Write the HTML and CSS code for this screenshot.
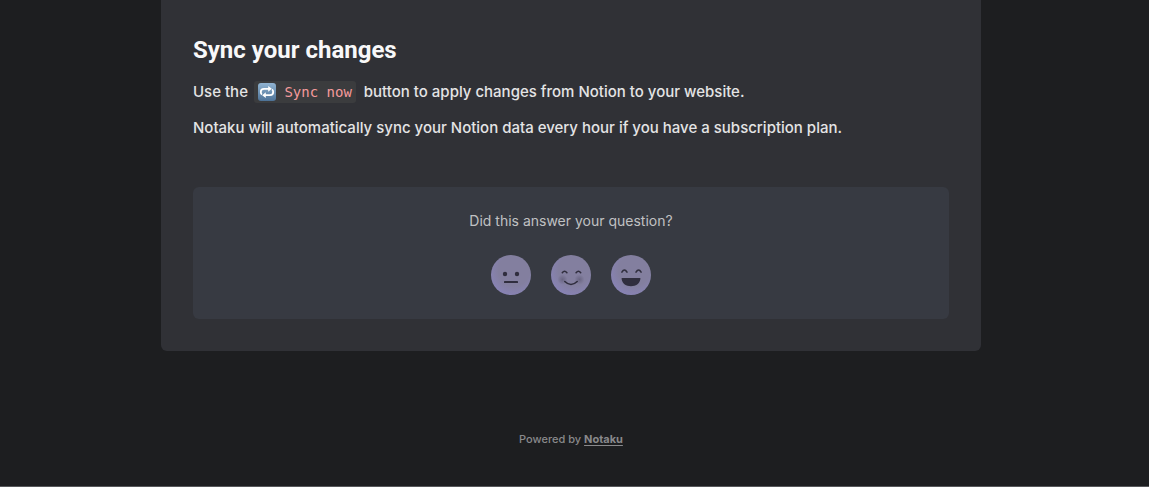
FILE: index.html
```html
<!DOCTYPE html>
<html lang="en">
  <head>
    <meta charset="UTF-8" />
    <meta name="viewport" content="width=device-width, initial-scale=1.0" />
    <title>Sync your changes</title>
    <link rel="stylesheet" href="styles.css">
  </head>
  <body>
    <main>
      <div class="card">
        <article class="content">
          <h2>Sync your changes</h2>
          <p>
            Use the
            <code><svg class="sync-icon" viewBox="0 0 18 18" aria-hidden="true">
                <defs>
                  <linearGradient id="syncBg" x1="0" y1="0" x2="0" y2="1">
                    <stop offset="0" stop-color="#91b4d2" />
                    <stop offset="1" stop-color="#4d7297" />
                  </linearGradient>
                </defs>
                <rect width="18" height="18" rx="3" fill="url(#syncBg)" />
                <g fill="none" stroke="#fff" stroke-width="1.8">
                  <path d="M3.9 11.6Q2.8 10.6 2.8 9Q2.8 5.8 6 5.8H11" />
                  <path d="M14.1 6.4Q15.2 7.4 15.2 9Q15.2 12.2 12 12.2H7" />
                </g>
                <path d="M10.2 2.9L13.8 5.8L10.2 8.7ZM7.8 9.3L4.2 12.2L7.8 15.1Z" fill="#fff" />
              </svg> Sync now</code>
            button to apply changes from Notion to your website.
          </p>
          <p>Notaku will automatically sync your Notion data every hour if you have a subscription plan.</p>
        </article>

        <section class="feedback">
          <p id="question">Did this answer your question?</p>
          <div class="faces" role="group" aria-labelledby="question">
            <button type="button" aria-label="Not really">
              <svg viewBox="0 0 40 40">
                <defs>
                  <radialGradient id="face" cx="0.58" cy="0.38" r="0.65">
                    <stop offset="0.6" stop-color="#837f9f" />
                    <stop offset="1" stop-color="#8883b5" />
                  </radialGradient>
                  <radialGradient id="blush">
                    <stop offset="0" stop-color="#635f7b" stop-opacity="0.8" />
                    <stop offset="1" stop-color="#635f7b" stop-opacity="0" />
                  </radialGradient>
                </defs>
                <circle cx="20" cy="20" r="20" fill="url(#face)" />
                <circle cx="14" cy="19" r="2.2" fill="#302e3e" />
                <circle cx="26" cy="19" r="2.2" fill="#302e3e" />
                <rect x="13" y="26" width="14" height="2" rx="0.6" fill="#302e3e" />
              </svg>
            </button>
            <button type="button" aria-label="Yes">
              <svg viewBox="0 0 40 40">
                <circle cx="20" cy="20" r="20" fill="url(#face)" />
                <circle cx="11.5" cy="24.5" r="5" fill="url(#blush)" />
                <circle cx="28.5" cy="24.5" r="5" fill="url(#blush)" />
                <g fill="none" stroke="#302e3e" stroke-width="1.6" stroke-linecap="round">
                  <path d="M11.3 17.7Q13.5 14.9 15.9 17.7" />
                  <path d="M25.1 17.7Q27.5 14.9 29.7 17.7" />
                  <path d="M13.8 26.5Q20 32.5 26.2 26.5" />
                </g>
              </svg>
            </button>
            <button type="button" aria-label="Definitely">
              <svg viewBox="0 0 40 40">
                <circle cx="20" cy="20" r="20" fill="url(#face)" />
                <g fill="none" stroke="#302e3e" stroke-width="1.6" stroke-linecap="round">
                  <path d="M10.9 17.1Q13.4 12.9 16 17.1" />
                  <path d="M25 17.1Q27.6 12.9 30.1 17.1" />
                </g>
                <path d="M11 23H29Q29.6 23 29.4 24C28.5 29 25 31.2 20 31.2S11.5 29 10.6 24Q10.4 23 11 23Z" fill="#302e3e" />
              </svg>
            </button>
          </div>
        </section>
      </div>
    </main>

    <footer>Powered by <a href="#">Notaku</a></footer>
  </body>
</html>
```

FILE: styles.css
```css
* {
  box-sizing: border-box;
}
body {
  margin: 0;
  background: #1d1e20;
  color: #e4e4e5;
  font-family: Inter, sans-serif;
  font-size: 15px;
  line-height: 24px;
  font-weight: 500;
}
main {
  padding: 0 15px 0 8px;
}
.card {
  max-width: 820px;
  margin: 0 auto;
  padding: 32px;
  background: #303136;
  border-radius: 0 0 6px 6px;
}
.content h2 {
  margin: 0 0 12px;
  color: #f8f8f9;
  font-family: Roboto, sans-serif;
  font-size: 24px;
  line-height: 36px;
  font-weight: 700;
}
.content p {
  margin: 0 0 12px;
}
code {
  margin: 0 4px 0 2px;
  padding: 3px 4px;
  background: #3b3c3e;
  border-radius: 3px;
  color: #f59a9c;
  font-family: "DejaVu Sans Mono", monospace;
  font-size: 14px;
  line-height: 16px;
  font-weight: 400;
}
.sync-icon {
  width: 18px;
  height: 18px;
  vertical-align: -4px;
}
.feedback {
  margin-top: 47px;
  padding: 24px;
  background: #373a42;
  border-radius: 6px;
  text-align: center;
}
.feedback p {
  margin: 0 0 24px;
  color: #c0c1c3;
  font-size: 14px;
  line-height: 20px;
  font-weight: 400;
}
.faces {
  display: flex;
  justify-content: center;
  gap: 20px;
}
.faces button {
  width: 40px;
  height: 40px;
  padding: 0;
  background: none;
  border: none;
  border-radius: 50%;
  cursor: pointer;
}
.faces svg {
  display: block;
}
footer {
  padding: 80px 15px 39px 8px;
  border-bottom: 1px solid #57585b;
  color: #89898b;
  font-size: 11px;
  line-height: 16px;
  text-align: center;
}
footer a {
  color: inherit;
  font-weight: 700;
  text-underline-offset: 2px;
}
```
